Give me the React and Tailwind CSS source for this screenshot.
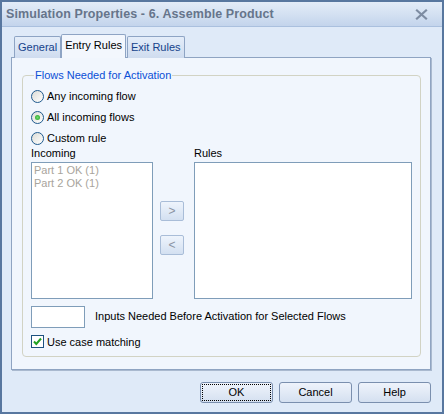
import React from "react";

const ui = { fontFamily: '"Liberation Sans", Arial, sans-serif' };

function Radio({ checked, label }) {
  return (
    <label className="flex items-center h-[21px] gap-[3px] text-[11px] text-black">
      <span className="w-[13px] h-[13px] rounded-full border border-[#1f5a8e] bg-gradient-to-br from-[#dcdcd6] to-white flex items-center justify-center shrink-0">
        {checked && (
          <span className="w-[5px] h-[5px] rounded-full bg-[radial-gradient(circle,#6fdc6f,#1f9b1f)]" />
        )}
      </span>
      <span>{label}</span>
    </label>
  );
}

function ArrowButton({ children }) {
  return (
    <div className="w-[24px] h-[20px] rounded-[2px] border border-[#a9bdd8] bg-gradient-to-b from-[#eef4fc] to-[#d3e0f1] flex items-center justify-center text-[12px] text-[#8a94a3]">
      {children}
    </div>
  );
}

function DialogButton({ children, focused }) {
  return (
    <div className="w-[73px] h-[21px] rounded-[3px] border border-[#7a8fae] bg-gradient-to-b from-[#eef3fb] via-[#e2eaf6] to-[#d4e0f0] p-[1px]">
      <div
        className={
          "w-full h-full flex items-center justify-center text-[11px] text-black " +
          (focused ? "border border-dotted border-black" : "")
        }
      >
        {children}
      </div>
    </div>
  );
}

export default function App() {
  return (
    <div
      style={ui}
      className="w-[444px] h-[414px] border-2 border-[#58779f] bg-[#dfeaf8] flex flex-col overflow-hidden"
    >
      {/* title bar */}
      <div className="h-[25px] shrink-0 flex items-center justify-between pl-[4px] pr-[14px] bg-gradient-to-b from-[#e3ecf8] via-[#d4e1f2] to-[#c3d4ec] border-b border-[#aac0de]">
        <span className="text-[12.5px] font-bold text-[#66758b] tracking-[0.1px]">
          Simulation Properties - 6. Assemble Product
        </span>
        <svg width="13" height="11" viewBox="0 0 13 11">
          <path d="M2 1.5 L11 9.5 M11 1.5 L2 9.5" stroke="#7d8ca2" strokeWidth="2.2" strokeLinecap="square" />
        </svg>
      </div>

      <div className="flex-1 flex flex-col pl-[9px] pr-[11px] pt-[7px]">
        {/* tab strip */}
        <div className="flex items-end pl-[3px] h-[24px] relative z-10 -mb-px">
          <div className="h-[22px] px-[3px] border border-[#8ea4c4] border-b-0 rounded-t-[2px] bg-gradient-to-b from-[#e4edf9] to-[#cfdcef] text-[11px] text-[#15428b] flex items-center">
            General
          </div>
          <div className="h-[24px] px-[3px] border border-[#8ea4c4] border-b-0 rounded-t-[2px] bg-[#f3f7fd] text-[11px] text-black flex items-center pb-[2px]">
            Entry Rules
          </div>
          <div className="h-[22px] ml-[1px] px-[3px] border border-[#8ea4c4] border-b-0 rounded-t-[2px] bg-gradient-to-b from-[#e4edf9] to-[#cfdcef] text-[11px] text-[#15428b] flex items-center">
            Exit Rules
          </div>
        </div>

        {/* tab page */}
        <div className="w-[420px] h-[313px] border border-[#8fa4c2] bg-[#f1f6fd] shadow-[1px_1px_0_#a9b9cf] px-[10px] pt-[9px]">
          <fieldset className="h-[290px] border border-[#d2d3c4] rounded-[4px] pl-[8px] pr-[8px]">
            <legend className="text-[11px] text-[#0b4fd6] ml-[3px] px-[1px]">
              Flows Needed for Activation
            </legend>
            <div className="flex flex-col mt-[2px]">
              <Radio label="Any incoming flow" />
              <Radio checked label="All incoming flows" />
              <Radio label="Custom rule" />
            </div>

            <div className="flex -mt-[1px]">
              <div className="flex flex-col">
                <span className="text-[11px] text-black h-[14px] leading-[10px]">Incoming</span>
                <div className="w-[122px] h-[137px] border border-[#7f9db9] bg-white px-[2px] pt-[1px] text-[11px] leading-[13px] text-[#a8a49c]">
                  <div>Part 1 OK (1)</div>
                  <div>Part 2 OK (1)</div>
                </div>
              </div>
              <div className="w-[41px] flex flex-col items-start pl-[7px] pt-[53px] gap-[14px]">
                <ArrowButton>&gt;</ArrowButton>
                <ArrowButton>&lt;</ArrowButton>
              </div>
              <div className="flex flex-col">
                <span className="text-[11px] text-black h-[14px] leading-[10px]">Rules</span>
                <div className="w-[218px] h-[137px] border border-[#7f9db9] bg-white" />
              </div>
            </div>

            <div className="flex items-center mt-[7px] gap-[10px]">
              <div className="w-[54px] h-[22px] border border-[#7f9db9] bg-white" />
              <span className="text-[11px] text-black">
                Inputs Needed Before Activation for Selected Flows
              </span>
            </div>

            <label className="flex items-center gap-[3px] mt-[6px] text-[11px] text-black">
              <span className="w-[13px] h-[13px] border border-[#1c5180] bg-white flex items-center justify-center shrink-0">
                <svg width="9" height="9" viewBox="0 0 9 9">
                  <path d="M1 4.5 L3.3 7 L8 1.5" fill="none" stroke="#21a121" strokeWidth="2" />
                </svg>
              </span>
              <span>Use case matching</span>
            </label>
          </fieldset>
        </div>

        {/* dialog buttons */}
        <div className="flex justify-end gap-[6px] mt-[12px]">
          <DialogButton focused>OK</DialogButton>
          <DialogButton>Cancel</DialogButton>
          <DialogButton>Help</DialogButton>
        </div>
      </div>
    </div>
  );
}
